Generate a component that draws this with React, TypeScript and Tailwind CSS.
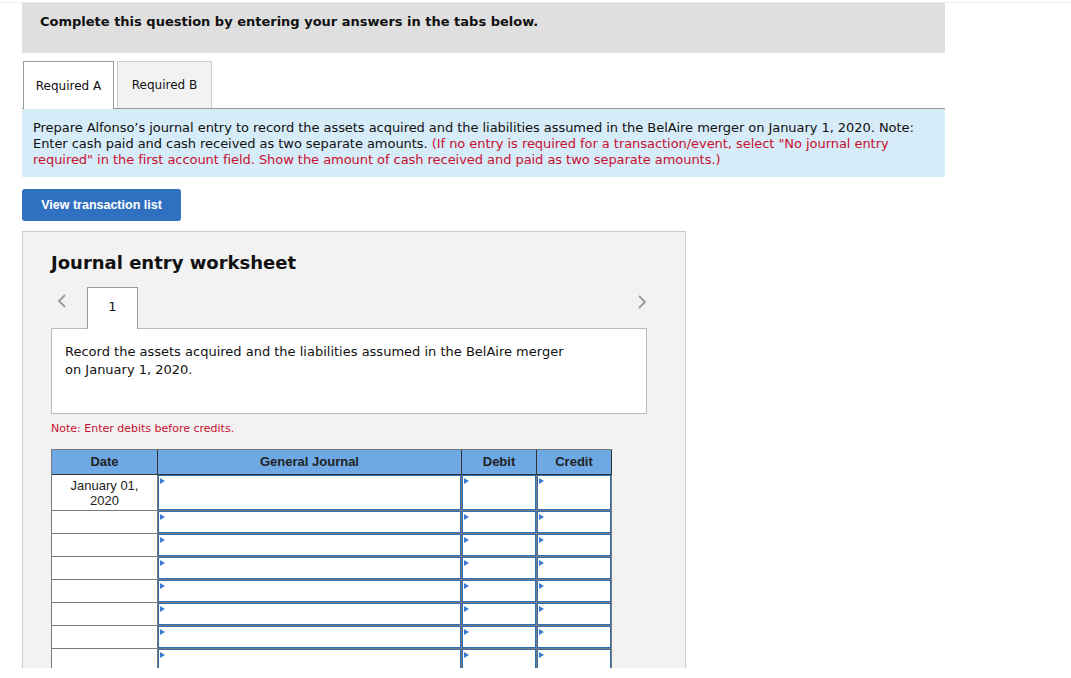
import React from 'react';

const verdana = { fontFamily: '"DejaVu Sans", Verdana, sans-serif' };
const arial = { fontFamily: '"Liberation Sans", Arial, sans-serif' };

// Small blue marker in the corner of each entry field
const Marker: React.FC = () => (
  <span className="absolute top-[2px] left-[1px] w-0 h-0 border-y-[3.5px] border-y-transparent border-l-[5px] border-l-[#3b7bd2]" />
);

const EntryField: React.FC = () => (
  <div className="relative h-full w-full bg-white border border-[#2f6db5]">
    <Marker />
  </div>
);

const Chevron: React.FC<{ dir: 'left' | 'right' }> = ({ dir }) => (
  <svg width="10" height="16" viewBox="0 0 10 16" fill="none">
    <polyline
      points={dir === 'left' ? '8,2 2,8 8,14' : '2,2 8,8 2,14'}
      stroke="#9a9a9a"
      strokeWidth="1.8"
      strokeLinejoin="miter"
    />
  </svg>
);

const columns = [
  { key: 'date', label: 'Date', w: 'w-[106px]' },
  { key: 'account', label: 'General Journal', w: 'w-[304px]' },
  { key: 'debit', label: 'Debit', w: 'w-[75px]' },
  { key: 'credit', label: 'Credit', w: 'w-[75px]' },
];

const rowHeights = [36, 23, 23, 23, 23, 23, 23, 23, 23, 23];

const JournalTable: React.FC = () => (
  <div className="w-[561px] border-l border-t border-[#7a7a7a]" style={arial}>
    {/* header */}
    <div className="flex h-[25px] bg-[#6ea9e6] border-b border-[#333]">
      {columns.map((c) => (
        <div
          key={c.key}
          className={`${c.w} flex items-center justify-center text-[13px] font-bold text-[#222] border-r border-[#333]`}
        >
          {c.label}
        </div>
      ))}
    </div>
    {/* rows */}
    {rowHeights.map((h, r) => (
      <div key={r} className="flex bg-white" style={{ height: h }}>
        <div className="w-[106px] border-r border-b border-[#7a7a7a] flex justify-center pt-[3px] text-[13px] leading-[15px] text-[#222] text-center">
          {r === 0 ? (
            <span>
              January 01,
              <br />
              2020
            </span>
          ) : null}
        </div>
        <div className="w-[304px] border-r border-b border-[#7a7a7a]">
          <EntryField />
        </div>
        <div className="w-[75px] border-r border-b border-[#7a7a7a]">
          <EntryField />
        </div>
        <div className="w-[75px] border-r border-b border-[#7a7a7a]">
          <EntryField />
        </div>
      </div>
    ))}
  </div>
);

const App: React.FC = () => {
  return (
    <div className="h-screen bg-white text-[#111]" style={verdana}>
      {/* scrolling question area */}
      <div className="h-[668px] overflow-hidden">
        <div className="h-[2px]" />
        <div className="border-t border-[#ececec]" />

        <div className="ml-[22px] w-[923px]">
          {/* question banner */}
          <div className="h-[50px] bg-[#dfdfdf] pl-[18px] pt-[9px] text-[13px] font-bold text-[#111]">
            Complete this question by entering your answers in the tabs below.
          </div>

          {/* requirement tabs */}
          <div className="mt-[8px] flex items-end border-b border-[#999] h-[48px]">
            <div className="ml-[1px] h-[48px] w-[91px] bg-white border border-b-0 border-[#999] -mb-px flex items-center justify-center text-[12px]">
              Required A
            </div>
            <div className="ml-[3px] h-[47px] w-[95px] bg-[#f2f2f2] border border-b-0 border-[#ccc] flex items-center justify-center text-[12px]">
              Required B
            </div>
          </div>

          {/* instructions */}
          <div className="bg-[#d6ecf9] pl-[11px] pr-[24px] pt-[11px] pb-[9px] text-[13px] leading-[16px] tracking-[-0.05px] text-[#111]">
            Prepare Alfonso’s journal entry to record the assets acquired and the liabilities assumed in the BelAire merger on January 1, 2020. Note: Enter cash paid and cash received as two separate amounts.{' '}
            <span className="text-[#c8102e]">
              (If no entry is required for a transaction/event, select "No journal entry required" in the first account field. Show the amount of cash received and paid as two separate amounts.)
            </span>
          </div>

          <button className="mt-[12px] h-[32px] w-[159px] rounded-[3px] bg-[#2f70c0] text-white text-[12.5px] font-bold" style={arial}>
            View transaction list
          </button>

          {/* worksheet panel */}
          <div className="mt-[10px] w-[664px] bg-[#f2f2f2] border border-[#ccc] pl-[28px] pt-[20px] pb-[40px]">
            <h2 className="text-[18px] font-bold leading-[22px] text-[#111]">Journal entry worksheet</h2>

            <div className="mt-[13px] flex items-start w-[596px]">
              <div className="w-[36px] h-[28px] flex items-center pl-[6px]">
                <Chevron dir="left" />
              </div>
              <div className="relative z-10 h-[42px] w-[51px] bg-white border border-b-0 border-[#999] flex items-start justify-center pt-[9px] text-[13px]">
                1
              </div>
              <div className="flex-1 flex justify-end h-[30px] items-center">
                <Chevron dir="right" />
              </div>
            </div>

            <div className="-mt-[1px] w-[596px] h-[86px] bg-white border border-[#bbb] pl-[13px] pt-[14px] text-[13px] leading-[18px] text-[#111]">
              Record the assets acquired and the liabilities assumed in the BelAire merger
              <br />
              on January 1, 2020.
            </div>

            <div className="mt-[7px] text-[11px] text-[#c8102e]">Note: Enter debits before credits.</div>

            <div className="mt-[11px]">
              <JournalTable />
            </div>
          </div>
        </div>
      </div>
    </div>
  );
};

export default App;
